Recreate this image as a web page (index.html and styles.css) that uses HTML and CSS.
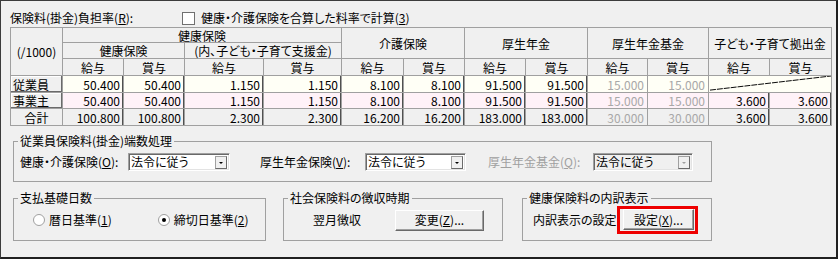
FILE: index.html
```html
<!DOCTYPE html>
<html lang="ja">
<head>
<meta charset="utf-8">
<link rel="stylesheet" href="styles.css">
</head>
<body>
<div class="window">
  <div class="topline">
    <span class="rate-lbl">保険料(掛金)負担率(<u>R</u>):</span>
    <span class="chk"><span class="chk-box"></span>健康・介護保険を合算した料率で計算(<u>3</u>)</span>
  </div>

  <div class="grid">
    <div class="hd rs3">(/1000)</div>
    <div class="hd cs4">健康保険</div>
    <div class="hd cs2 rs2">介護保険</div>
    <div class="hd cs2 rs2">厚生年金</div>
    <div class="hd cs2 rs2">厚生年金基金</div>
    <div class="hd cs2 rs2">子ども・子育て拠出金</div>
    <div class="hd cs2">健康保険</div>
    <div class="hd cs2">(内、子ども・子育て支援金)</div>
    <div class="hd">給与</div><div class="hd">賞与</div>
    <div class="hd">給与</div><div class="hd">賞与</div>
    <div class="hd">給与</div><div class="hd">賞与</div>
    <div class="hd">給与</div><div class="hd">賞与</div>
    <div class="hd">給与</div><div class="hd">賞与</div>
    <div class="hd">給与</div><div class="hd">賞与</div>

    <div class="rl">従業員</div>
    <div class="num emp">50.400</div><div class="num emp">50.400</div>
    <div class="num emp">1.150</div><div class="num emp">1.150</div>
    <div class="num emp">8.100</div><div class="num emp">8.100</div>
    <div class="num emp">91.500</div><div class="num emp">91.500</div>
    <div class="num emp dis">15.000</div><div class="num emp dis">15.000</div>
    <div class="num emp cs2 diag"><svg class="diag-svg" viewBox="0 0 123 17" preserveAspectRatio="none"><line x1="1" y1="15" x2="123" y2="0" stroke="#000" stroke-width="1" stroke-dasharray="6 1"/></svg></div>

    <div class="rl">事業主</div>
    <div class="num own">50.400</div><div class="num own">50.400</div>
    <div class="num own">1.150</div><div class="num own">1.150</div>
    <div class="num own">8.100</div><div class="num own">8.100</div>
    <div class="num own">91.500</div><div class="num own">91.500</div>
    <div class="num own dis">15.000</div><div class="num own dis">15.000</div>
    <div class="num own">3.600</div><div class="num own">3.600</div>

    <div class="rl tot-lbl">合計</div>
    <div class="num tot">100.800</div><div class="num tot">100.800</div>
    <div class="num tot">2.300</div><div class="num tot">2.300</div>
    <div class="num tot">16.200</div><div class="num tot">16.200</div>
    <div class="num tot">183.000</div><div class="num tot">183.000</div>
    <div class="num tot dis">30.000</div><div class="num tot dis">30.000</div>
    <div class="num tot">3.600</div><div class="num tot">3.600</div>
  </div>

  <fieldset class="grp grp-round">
    <legend>従業員保険料(掛金)端数処理</legend>
    <div class="round-row">
      <span class="f-lbl w1">健康・介護保険(<u>O</u>):</span>
      <span class="combo w-c1"><span class="combo-val">法令に従う</span><span class="combo-btn"><span class="arrow"></span></span></span>
      <span class="f-lbl w2">厚生年金保険(<u>V</u>):</span>
      <span class="combo w-c2"><span class="combo-val">法令に従う</span><span class="combo-btn"><span class="arrow"></span></span></span>
      <span class="f-lbl w3 dis-txt">厚生年金基金(<u>Q</u>):</span>
      <span class="combo w-c3 combo-dis"><span class="combo-val">法令に従う</span><span class="combo-btn"><span class="arrow"></span></span></span>
    </div>
  </fieldset>

  <div class="bottom-row">
    <fieldset class="grp grp-days">
      <legend>支払基礎日数</legend>
      <div class="gbody">
        <span class="radio"><span class="radio-dot off"></span>暦日基準(<u>1</u>)</span>
        <span class="radio r2"><span class="radio-dot on"></span>締切日基準(<u>2</u>)</span>
      </div>
    </fieldset>
    <fieldset class="grp grp-collect">
      <legend>社会保険料の徴収時期</legend>
      <div class="gbody">
        <span class="collect-txt">翌月徴収</span>
        <span class="btn btn-change">変更(<u>Z</u>)...</span>
      </div>
    </fieldset>
    <fieldset class="grp grp-detail">
      <legend>健康保険料の内訳表示</legend>
      <div class="gbody">
        <span class="detail-txt">内訳表示の設定</span>
        <span class="hl"><span class="btn btn-set">設定(<u>X</u>)...</span></span>
      </div>
    </fieldset>
  </div>
</div>
</body>
</html>
```

FILE: styles.css
```css
* { box-sizing: border-box; }
html, body { margin: 0; padding: 0; }
body {
  background: #f0f0f0;
  font-family: "Noto Sans CJK JP", "Noto Sans", sans-serif;
  font-size: 12px;
  font-feature-settings: "palt";
  color: #000;
}
u { text-decoration: underline; text-underline-offset: 1px; }

.window {
  width: 838px;
  height: 259px;
  border-top: 1px solid #3c3c3c;
  border-left: 1px solid #3c3c3c;
  border-right: 2px solid #202020;
  border-bottom: 2px solid #202020;
  background: #f0f0f0;
  padding: 8px 0 0 9px;
}

.topline {
  display: flex;
  align-items: center;
  height: 18px;
  line-height: 16px;
}
.rate-lbl { width: 172px; }
.chk { display: flex; align-items: center; }
.chk-box {
  width: 13px; height: 13px;
  border: 1px solid #707070;
  background: #fff;
  margin-right: 6px;
}

/* grid table */
.grid {
  display: grid;
  width: 822px;
  grid-template-columns: 52px 61px 61px 79px 78px 62px 61px 61px 62px 60px 61px 61px 62px;
  grid-template-rows: 15px 16px 17px 17px 16px 17px;
  border-top: 1px solid #a0a0a0;
  border-left: 1px solid #a0a0a0;
  line-height: 13px;
}
.grid > div {
  border-right: 1px solid #a0a0a0;
  border-bottom: 1px solid #a0a0a0;
  white-space: nowrap;
}
.hd {
  display: flex;
  align-items: center;
  justify-content: center;
  background: #f0f0f0;
}
.cs2 { grid-column: span 2; }
.cs4 { grid-column: span 4; }
.rs2 { grid-row: span 2; }
.rs3 { grid-row: span 3; }

.rl {
  display: flex;
  align-items: center;
  padding-left: 2px;
  background: #f0f0f0;
  box-shadow: inset -1px -1px 0 #6a6a6a, inset 1px 1px 0 #fff;
}
.tot-lbl { justify-content: center; box-shadow: none; padding-left: 0; }

.num {
  display: flex;
  align-items: center;
  justify-content: flex-end;
  padding-right: 3px;
  font-feature-settings: normal;
  box-shadow: inset -1px 0 0 #505050;
}
.emp { background: #fffff6; }
.own { background: #fff2f8; }
.tot { background: #f0f0f0; }
.dis { color: #a8a8a8; box-shadow: none; }
.diag { box-shadow: none; padding: 0; }
.diag-svg { width: 100%; height: 100%; display: block; }

/* group boxes */
.grp {
  border: 1px solid #a0a0a0;
  margin: 0;
  padding: 0;
  min-width: 0;
}
.grp legend {
  padding: 0 2px;
  margin-left: 4px;
  line-height: 14px;
}
.grp-round {
  width: 699px;
  margin: 8px 0 0 3px;
}
.round-row {
  display: flex;
  align-items: center;
  padding: 5px 0 10px 6px;
  line-height: 16px;
}
.f-lbl { white-space: nowrap; }
.w1 { width: 108px; }
.w2 { width: 105px; margin-left: 30px; }
.w3 { width: 105px; margin-left: 22px; }
.dis-txt { color: #a0a0a0; }

.combo {
  display: flex;
  align-items: center;
  height: 18px;
  background: #fff;
  border-top: 1px solid #a0a0a0;
  border-left: 1px solid #a0a0a0;
  border-right: 1px solid #fff;
  border-bottom: 1px solid #fff;
  box-shadow: inset 1px 1px 0 #696969, inset -1px -1px 0 #e3e3e3;
  padding: 0 2px 0 2px;
}
.w-c1 { width: 102px; }
.w-c2 { width: 101px; }
.w-c3 { width: 100px; }
.combo-val { flex: 1; }
.combo-btn {
  width: 12px;
  height: 13px;
  border: 1px solid #6a6a6a;
  border-top-color: #a0a0a0;
  border-left-color: #a0a0a0;
  background: #f0f0f0;
  display: flex;
  align-items: center;
  justify-content: center;
}
.arrow {
  width: 0; height: 0;
  border-left: 2px solid transparent;
  border-right: 2px solid transparent;
  border-top: 2px solid #000;
  margin-top: 2px;
}
.combo-dis { background: #f0f0f0; color: #000; }
.combo-dis .arrow { border-top-color: #a0a0a0; }

.bottom-row {
  display: flex;
  margin: 9px 0 0 3px;
}
.grp-days { width: 253px; height: 50px; }
.grp-collect { width: 220px; height: 50px; margin-left: 17px; }
.grp-detail { width: 190px; height: 50px; margin-left: 19px; }
.gbody {
  display: flex;
  align-items: center;
  height: 35px;
  padding-bottom: 5px;
  line-height: 16px;
}

.grp-days .gbody { padding-left: 19px; }
.radio { display: flex; align-items: center; white-space: nowrap; }
.r2 { margin-left: 46px; }
.radio-dot {
  width: 12px; height: 12px;
  border-radius: 50%;
  background: #fff;
  border: 1px solid #a0a0a0;
  margin-right: 4px;
  display: flex; align-items: center; justify-content: center;
}
.radio-dot.on::after {
  content: "";
  width: 4px; height: 4px;
  border-radius: 50%;
  background: #000;
}

.grp-collect .gbody { padding-left: 29px; }
.collect-txt { width: 82px; }
.btn {
  display: flex;
  align-items: center;
  justify-content: center;
  height: 21px;
  background: #f0f0f0;
  border-top: 1px solid #fff;
  border-left: 1px solid #fff;
  border-right: 1px solid #696969;
  border-bottom: 1px solid #696969;
  box-shadow: inset -1px -1px 0 #a0a0a0;
  white-space: nowrap;
}
.btn-change { width: 89px; }

.grp-detail .gbody { padding-left: 10px; }
.detail-txt { width: 84px; }
.hl {
  display: flex;
  border: 3px solid #ee0000;
  padding: 0 1px 1px 3px;
}
.btn-set { width: 71px; }
```
